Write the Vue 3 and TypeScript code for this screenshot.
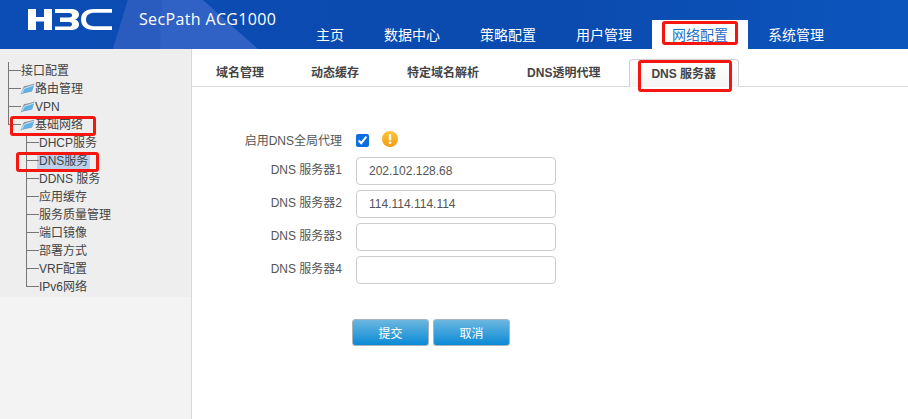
<script setup lang="ts">
interface TreeItem { label: string; kind: 'plain' | 'folder' | 'child'; selected?: boolean; last?: boolean; first?: boolean }
const navItems = ['主页', '数据中心', '策略配置', '用户管理', '网络配置', '系统管理']
const tabs = ['域名管理', '动态缓存', '特定域名解析', 'DNS透明代理', 'DNS 服务器']
const tree: TreeItem[] = [
  { label: '接口配置', kind: 'plain' },
  { label: '路由管理', kind: 'folder' },
  { label: 'VPN', kind: 'folder' },
  { label: '基础网络', kind: 'folder', last: true },
  { label: 'DHCP服务', kind: 'child', first: true },
  { label: 'DNS服务', kind: 'child', selected: true },
  { label: 'DDNS 服务', kind: 'child' },
  { label: '应用缓存', kind: 'child' },
  { label: '服务质量管理', kind: 'child' },
  { label: '端口镜像', kind: 'child' },
  { label: '部署方式', kind: 'child' },
  { label: 'VRF配置', kind: 'child' },
  { label: 'IPv6网络', kind: 'child', last: true }
]
const servers = [
  { label: 'DNS 服务器1', value: '202.102.128.68' },
  { label: 'DNS 服务器2', value: '114.114.114.114' },
  { label: 'DNS 服务器3', value: '' },
  { label: 'DNS 服务器4', value: '' }
]
</script>

<template>
  <div class="page">
    <header class="header">
      <svg class="band" width="908" height="49" viewBox="0 0 908 49" aria-hidden="true">
        <polygon points="113,49 128,0 203,0 258,49" fill="#2f62c4" />
        <polygon points="113,49 128,0 162,0 160,49" fill="#2a5cc0" />
      </svg>
      <svg class="logo" width="84" height="21" viewBox="0 0 84 21" aria-hidden="true">
        <path fill="#fff" d="M0 0h8v8h8V0h8v21h-8V12.500H8V21H0z" />
        <path fill="#fff" d="M27 0h15c6 0 9 2 9 5.500 0 2.500-1.500 4-4 5 2.500.8 4 2.300 4 5 0 3.500-3 5.500-9 5.500H27v-3.500h14c2 0 3-.7 3-2.300 0-1.400-1-2.200-3-2.200H32V8.500h9c2 0 3-.8 3-2.200 0-1.500-1-2.300-3-2.300H27z" />
        <path fill="#fff" d="M84 0v3.700H67c-6 0-9 2.500-9 6.800s3 6.800 9 6.800h17V21H66C58 21 53 17 53 10.500S58 0 66 0z" />
      </svg>
      <span class="product">SecPath ACG1000</span>
      <nav class="nav">
        <a v-for="item in navItems" :key="item" class="nav-item" :class="{ active: item === '网络配置' }">{{ item }}</a>
      </nav>
    </header>

    <div class="body">
      <aside class="sidebar">
        <ul class="tree">
          <li v-for="node in tree" :key="node.label" class="node" :class="[node.kind, { last: node.last, first: node.first }]">
            <span class="connector"></span>
            <svg v-if="node.kind === 'folder'" class="folder-icon" width="15" height="12" viewBox="0 0 15 12" aria-hidden="true">
              <path d="M0.500 11.500 3 5 4 3 7.500 2.500 14.500 0.500 14 2 12 8.500 3 10.500z" fill="#8a9aa6" />
              <path d="M1.500 10.800 4 5.500 14 2.300 12 8 3 10.300z" fill="#5fb2e6" />
              <path d="M1.800 10.300 4.200 5.400 13.800 2.200" fill="none" stroke="#d8eefa" stroke-width=".9" />
            </svg>
            <span class="node-label" :class="{ selected: node.selected }">{{ node.label }}</span>
          </li>
        </ul>
      </aside>

      <main class="content">
        <div class="tabs">
          <a v-for="tab in tabs" :key="tab" class="tab" :class="{ active: tab === 'DNS 服务器' }">{{ tab }}</a>
        </div>

        <form class="form" @submit.prevent>
          <label class="label toggle-label">启用DNS全局代理</label>
          <div class="toggle">
            <input class="check" type="checkbox" checked />
            <svg class="warn" width="16" height="16" viewBox="0 0 16 16" aria-hidden="true">
              <defs>
                <linearGradient id="warnFill" x1="0" y1="0" x2="0" y2="1">
                  <stop offset="0" stop-color="#fdc63f" />
                  <stop offset="1" stop-color="#f39a0c" />
                </linearGradient>
              </defs>
              <circle cx="8" cy="8" r="8" fill="url(#warnFill)" />
              <rect x="6.800" y="3" width="2.400" height="6.500" rx="1" fill="#fff" />
              <circle cx="8" cy="11.800" r="1.400" fill="#fff" />
            </svg>
          </div>
          <template v-for="s in servers" :key="s.label">
            <label class="label">{{ s.label }}</label>
            <input class="field" type="text" :value="s.value" />
          </template>
          <div class="actions">
            <button class="btn" type="button">提交</button>
            <button class="btn" type="button">取消</button>
          </div>
        </form>
      </main>
    </div>

    <i class="mark mark-nav"></i>
    <i class="mark mark-tab"></i>
    <i class="mark mark-tree"></i>
    <i class="mark mark-dns"></i>
  </div>
</template>

<style>
html, body { margin: 0; background: #fff; }
</style>

<style scoped>
.page {
  position: relative;
  width: 908px;
  height: 419px;
  overflow: hidden;
  font-family: "Liberation Sans", "Noto Sans CJK SC", sans-serif;
  font-size: 12px;
  color: #555;
}
.header {
  position: relative;
  display: flex;
  height: 49px;
  background: linear-gradient(90deg, #0b4db5 0%, #0b4aae 60%, #0c55bd 100%);
}
.band { position: absolute; left: 0; top: 0; }
.logo { position: relative; flex: none; margin: 9px 0 0 28px; }
.product {
  position: relative;
  flex: none;
  width: 137px;
  margin: 9px 0 0 27px;
  font-family: "Open Sans", "Noto Sans CJK SC", sans-serif;
  font-size: 16px;
  letter-spacing: .35px;
  line-height: 20px;
  color: #fff;
  white-space: nowrap;
}
.nav {
  position: relative;
  display: flex;
  margin: 20px 0 0 20px;
  height: 29px;
}
.nav-item {
  padding: 0 20px;
  font-size: 14px;
  line-height: 30px;
  color: #fff;
}
.nav-item.active { background: #fff; color: #2a6fc9; }
.body { display: flex; height: 370px; }
.sidebar {
  box-sizing: border-box;
  width: 192px;
  border-right: 1px solid #d8d8d8;
  background: linear-gradient(#eee 0, #eee 248px, #f3f3f3 248px);
  padding-top: 13px;
}
.tree { margin: 0; padding: 0; list-style: none; }
.node {
  display: flex;
  align-items: center;
  height: 18px;
  color: #444;
  white-space: nowrap;
}
.connector { position: relative; flex: none; width: 13px; height: 18px; margin-left: 8px; }
.connector::before {
  content: "";
  position: absolute;
  left: 0;
  top: 0;
  bottom: 0;
  border-left: 1px solid #777;
}
.connector::after {
  content: "";
  position: absolute;
  left: 0;
  right: 0;
  top: 8px;
  border-top: 1px solid #777;
}
.last .connector::before { bottom: 9px; }
.first .connector::before { top: 2px; }
.child .connector { margin-left: 26px; width: 13px; }
.folder-icon { flex: none; margin-left: -1px; }
.node-label { line-height: 16px; }
.selected { background: #bcd0ec; padding: 0 2px; margin-left: -2px; }
.content { flex: 1; min-width: 0; }
.tabs {
  box-sizing: border-box;
  display: flex;
  height: 38px;
  padding-top: 10px;
  border-bottom: 1px solid #d9d9d9;
}
.tab {
  padding: 0 24px;
  height: 28px;
  line-height: 29px;
  font-weight: 700;
  color: #444;
  white-space: nowrap;
}
.tab:first-child { padding-right: 23px; }
.tab.active {
  box-sizing: border-box;
  margin-left: 5px;
  padding: 0 22px 0 21px;
  border: 1px solid #d2d2d2;
  border-bottom: 0;
  border-radius: 4px 4px 0 0;
  background: linear-gradient(#fff, #f5f5f5);
}
.form {
  display: grid;
  grid-template-columns: 150px 200px;
  grid-auto-rows: 28px;
  column-gap: 14px;
  row-gap: 5px;
  align-items: center;
  padding-top: 37px;
}
.label { text-align: right; padding-bottom: 6px; color: #555; }
.toggle-label { padding: 2px 0 0; }
.toggle { display: flex; align-items: center; gap: 13px; }
.check { width: 13px; height: 13px; margin: 4px 0 0; accent-color: #0b6fe0; }
.warn { margin-top: 2px; }
.field {
  box-sizing: border-box;
  width: 200px;
  height: 28px;
  padding: 0 12px;
  border: 1px solid #ccc;
  border-radius: 4px;
  font: 12px "Liberation Sans", sans-serif;
  color: #555;
  outline: none;
}
.actions {
  grid-column: 1 / -1;
  align-self: start;
  display: flex;
  gap: 4px;
  margin: 30px 0 0 160px;
  height: 27px;
}
.btn {
  box-sizing: border-box;
  width: 77px;
  height: 27px;
  padding: 0;
  border: 1px solid #aab4bd;
  border-radius: 3px;
  background: linear-gradient(#6cb7df, #0a8ad6);
  color: #fff;
  font: 12px "Liberation Sans", "Noto Sans CJK SC", sans-serif;
}
.mark {
  position: absolute;
  box-sizing: border-box;
  border: 3px solid #f4160f;
  border-radius: 3px;
  pointer-events: none;
}
.mark-nav { left: 662px; top: 21px; width: 76px; height: 24px; }
.mark-tab { left: 638px; top: 60px; width: 94px; height: 32px; }
.mark-tree { left: 10px; top: 116px; width: 86px; height: 20px; }
.mark-dns { left: 16px; top: 152px; width: 83px; height: 20px; }
</style>
